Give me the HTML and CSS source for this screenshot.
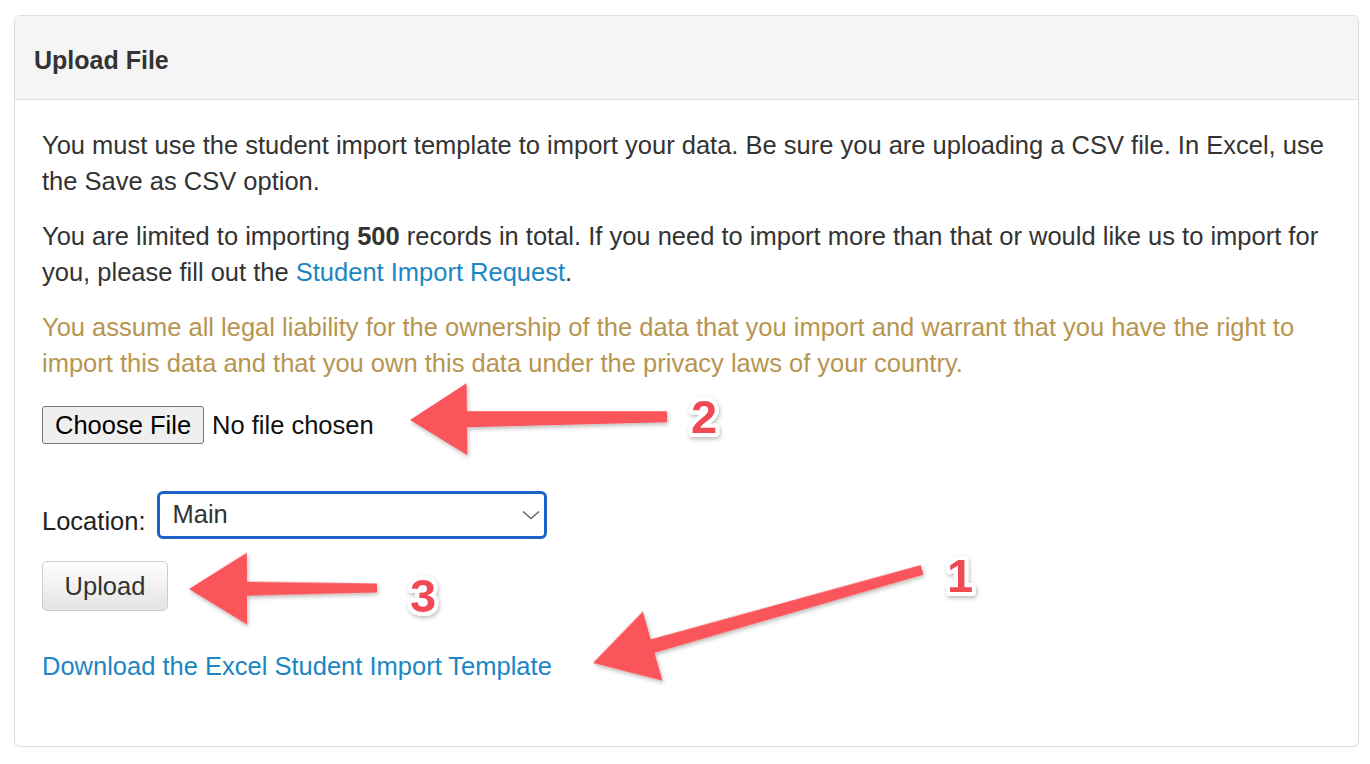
FILE: index.html
```html
<!DOCTYPE html>
<html lang="en">
<head>
<meta charset="utf-8">
<title>Upload File</title>
<link rel="stylesheet" href="styles.css">
</head>
<body>
<div class="page">
  <div class="panel">
    <div class="panel-heading">Upload File</div>
    <div class="panel-body">
      <p>You must use the student import template to import your data. Be sure you are uploading a CSV file. In Excel, use the Save as CSV option.</p>
      <p>You are limited to importing <strong>500</strong> records in total. If you need to import more than that or would like us to import for you, please fill out the <a href="#" class="link">Student Import Request</a>.</p>
      <p class="warning">You assume all legal liability for the ownership of the data that you import and warrant that you have the right to import this data and that you own this data under the privacy laws of your country.</p>
      <div class="file-row">
        <span class="file-btn">Choose File</span>
        <span class="file-name">No file chosen</span>
      </div>
      <div class="location-row">
        <label class="loc-label">Location:</label>
        <div class="select">
          <span>Main</span>
          <svg class="chev" width="18" height="10" viewBox="0 0 18 10"><path d="M1 1.5 L9 8.5 L17 1.5" fill="none" stroke="#666" stroke-width="1.6"/></svg>
        </div>
      </div>
      <div class="upload-row"><button class="btn">Upload</button></div>
      <p class="download"><a href="#" class="link">Download the Excel Student Import Template</a></p>
    </div>
  </div>
</div>
<svg class="overlay" width="1370" height="764" viewBox="0 0 1370 764">
  <defs>
    <filter id="sh" x="-20%" y="-20%" width="140%" height="140%">
      <feDropShadow dx="1" dy="2" stdDeviation="2" flood-color="#000" flood-opacity="0.28"/>
    </filter>
  </defs>
  <g fill="#f9555a" filter="url(#sh)">
    <g transform="translate(410 420) rotate(-0.7)">
      <polygon points="0,0 57,-36 57,-8 257,-5.5 257,5.5 57,8 57,36"/>
    </g>
    <g transform="translate(189 589) rotate(-0.3)">
      <polygon points="0,0 58,-36 58,-7 188,-4.5 188,4.5 58,7 58,36"/>
    </g>
    <g transform="translate(593 663) rotate(-15.8)">
      <polygon points="0,0 62,-36 62,-7 342,-5 342,5 62,7 62,36"/>
    </g>
  </g>
  <g class="nums" filter="url(#sh)">
    <text x="691" y="433">2</text>
    <text x="410" y="612">3</text>
    <text x="947" y="592">1</text>
  </g>
</svg>
</body>
</html>
```

FILE: styles.css
```css
html, body {
  margin: 0;
  padding: 0;
  background: #ffffff;
}

body {
  font-family: "Liberation Sans", Arial, sans-serif;
  color: #333333;
  font-size: 25.5px;
  line-height: 36px;
}

.page {
  padding: 15px 11px 0 14px;
}

.panel {
  border: 1px solid #dddddd;
  border-radius: 6px;
  background: #ffffff;
  box-shadow: 0 1px 2px rgba(0, 0, 0, 0.06);
  overflow: hidden;
}

.panel-heading {
  background: #f5f5f5;
  border-bottom: 1px solid #dddddd;
  height: 84px;
  box-sizing: border-box;
  padding: 4px 19px 0 19px;
  display: flex;
  align-items: center;
  font-weight: bold;
  font-size: 25px;
  color: #333333;
}

.panel-body {
  padding: 27px 27px 0 27px;
}

p {
  margin: 0 0 19px 0;
}

strong {
  font-weight: bold;
}

.link {
  color: #1a87c4;
  text-decoration: none;
}

.warning {
  color: #b8954f;
}

.file-row {
  margin-top: 25px;
  display: flex;
  align-items: center;
  gap: 8px;
  height: 38px;
}

.file-btn {
  box-sizing: border-box;
  height: 38px;
  padding: 0 12px;
  display: flex;
  align-items: center;
  background: #efefef;
  border: 1px solid #767676;
  border-radius: 3px;
  color: #000000;
}

.file-name {
  color: #111111;
}

.location-row {
  margin-top: 47px;
  display: flex;
  align-items: flex-end;
  gap: 11px;
}

.loc-label {
  line-height: 36px;
  color: #222222;
}

.select {
  box-sizing: border-box;
  width: 390px;
  height: 48px;
  border: 3px solid #1b63c6;
  border-radius: 6px;
  display: flex;
  align-items: center;
  justify-content: space-between;
  padding: 0 4px 0 13px;
  color: #333333;
}

.select span {
  margin-top: -2px;
}

.chev {
  display: block;
}

.upload-row {
  margin-top: 22px;
}

.btn {
  box-sizing: border-box;
  width: 126px;
  height: 50px;
  font-family: "Liberation Sans", Arial, sans-serif;
  font-size: 25.5px;
  color: #333333;
  background: linear-gradient(#ffffff, #e3e3e3);
  border: 1px solid #cccccc;
  border-radius: 5px;
  padding: 0;
}

.download {
  margin-top: 37px;
  margin-bottom: 62px;
}

.overlay {
  position: absolute;
  left: 0;
  top: 0;
  pointer-events: none;
}

.nums text {
  font-family: "Liberation Sans", Arial, sans-serif;
  font-weight: bold;
  font-size: 47px;
  fill: #ef4a52;
  stroke: #ffffff;
  stroke-width: 8px;
  stroke-linejoin: round;
  paint-order: stroke;
}
```
